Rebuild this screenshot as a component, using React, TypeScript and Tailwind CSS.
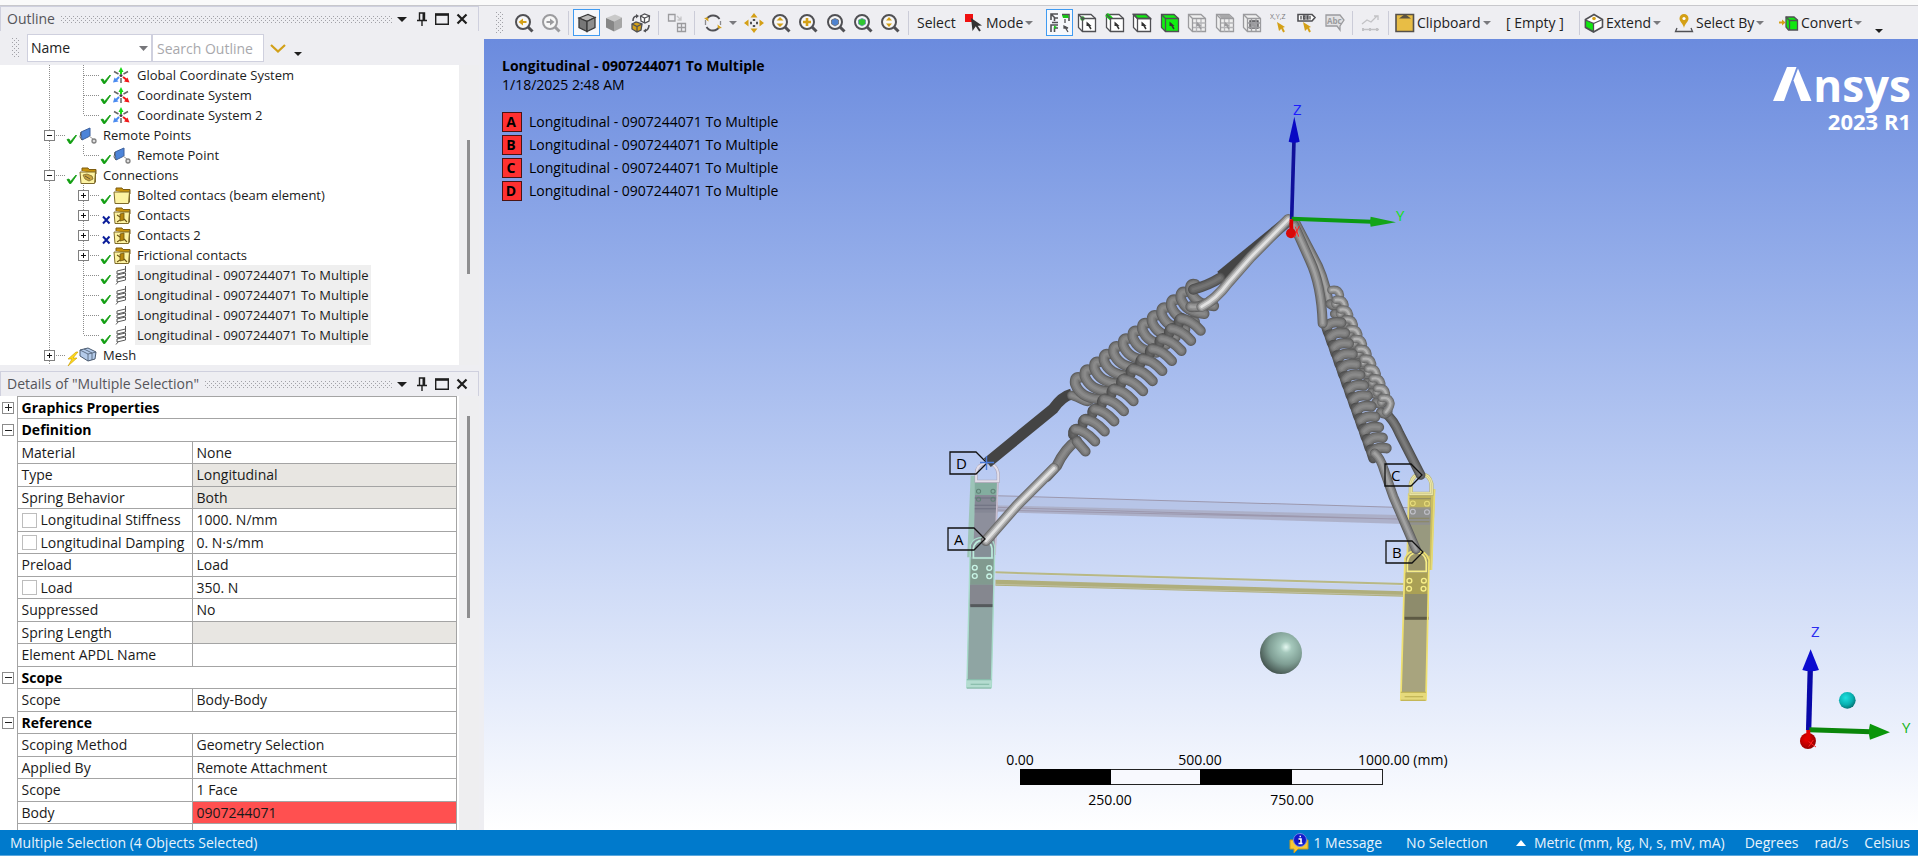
import React, { useState } from 'react';
import clsx from 'clsx';

type Status = 'ok' | 'off' | 'pending';
type IconKind = 'axes' | 'remote' | 'connections' | 'folder' | 'contact' | 'spring' | 'mesh';

interface TreeItem {
    label: string;
    level: 1 | 2;
    status: Status;
    icon: IconKind;
    box?: '+' | '-';
    last?: boolean;
    selected?: boolean;
}

interface DetailRow {
    label: string;
    value?: string;
    group?: '+' | '-';
    check?: boolean;
    tone?: 'readonly' | 'error';
}

const SPRING_NAME = 'Longitudinal - 0907244071 To Multiple';

const treeItems: TreeItem[] = [
    { label: 'Global Coordinate System', level: 2, status: 'ok', icon: 'axes' },
    { label: 'Coordinate System', level: 2, status: 'ok', icon: 'axes' },
    { label: 'Coordinate System 2', level: 2, status: 'ok', icon: 'axes', last: true },
    { label: 'Remote Points', level: 1, status: 'ok', icon: 'remote', box: '-' },
    { label: 'Remote Point', level: 2, status: 'ok', icon: 'remote', last: true },
    { label: 'Connections', level: 1, status: 'ok', icon: 'connections', box: '-' },
    { label: 'Bolted contacs (beam element)', level: 2, status: 'ok', icon: 'folder', box: '+' },
    { label: 'Contacts', level: 2, status: 'off', icon: 'contact', box: '+' },
    { label: 'Contacts 2', level: 2, status: 'off', icon: 'contact', box: '+' },
    { label: 'Frictional contacts', level: 2, status: 'ok', icon: 'contact', box: '+' },
    { label: SPRING_NAME, level: 2, status: 'ok', icon: 'spring', selected: true },
    { label: SPRING_NAME, level: 2, status: 'ok', icon: 'spring', selected: true },
    { label: SPRING_NAME, level: 2, status: 'ok', icon: 'spring', selected: true },
    { label: SPRING_NAME, level: 2, status: 'ok', icon: 'spring', selected: true, last: true },
    { label: 'Mesh', level: 1, status: 'pending', icon: 'mesh', box: '+' },
];

const detailRows: DetailRow[] = [
    { label: 'Graphics Properties', group: '+' },
    { label: 'Definition', group: '-' },
    { label: 'Material', value: 'None' },
    { label: 'Type', value: 'Longitudinal', tone: 'readonly' },
    { label: 'Spring Behavior', value: 'Both', tone: 'readonly' },
    { label: 'Longitudinal Stiffness', value: '1000. N/mm', check: true },
    { label: 'Longitudinal Damping', value: '0. N·s/mm', check: true },
    { label: 'Preload', value: 'Load' },
    { label: 'Load', value: '350. N', check: true },
    { label: 'Suppressed', value: 'No' },
    { label: 'Spring Length', value: '', tone: 'readonly' },
    { label: 'Element APDL Name', value: '' },
    { label: 'Scope', group: '-' },
    { label: 'Scope', value: 'Body-Body' },
    { label: 'Reference', group: '-' },
    { label: 'Scoping Method', value: 'Geometry Selection' },
    { label: 'Applied By', value: 'Remote Attachment' },
    { label: 'Scope', value: '1 Face' },
    { label: 'Body', value: '0907244071', tone: 'error' },
    { label: '', value: '' },
];

/* ---------- small shared pieces ---------- */

const Dots: React.FC<{ id: string; className: string }> = ({ id, className }) => (
    <svg className={className} aria-hidden="true">
        <defs>
            <pattern id={id} width="4" height="4" patternUnits="userSpaceOnUse">
                <rect width="1" height="1" fill="#a2a2a8" />
                <rect x="2" y="2" width="1" height="1" fill="#a2a2a8" />
            </pattern>
        </defs>
        <rect width="100%" height="100%" fill={`url(#${id})`} />
    </svg>
);

const Caret: React.FC<{ dark?: boolean }> = ({ dark }) => (
    <svg viewBox="0 0 8 4" className="h-1 w-2 shrink-0" aria-hidden="true">
        <path d="M0 0h8l-4 4z" fill={dark ? '#1e1e1e' : '#7a7a7e'} />
    </svg>
);

const PanelHeader: React.FC<{ title: string; id: string }> = ({ title, id }) => (
    <header className="flex h-[25px] shrink-0 items-center border-x border-t border-[#cfd0de] bg-[#eeeef2] pr-1.5 pl-1.5">
        <h2 className="whitespace-nowrap text-sm text-[#55555a]">{title}</h2>
        <Dots id={id} className="ml-1.5 h-[7px] min-w-0 flex-1" />
        <button aria-label="Window position" className="ml-1 flex h-5 w-3 items-center justify-center">
            <svg viewBox="0 0 10 5" className="h-[5px] w-2.5"><path d="M0 0h10l-5 5z" fill="#1e1e1e" /></svg>
        </button>
        <button aria-label="Auto hide" className="ml-1 flex h-5 w-5 items-center justify-center">
            <svg viewBox="0 0 12 14" className="h-3.5 w-3" fill="none" stroke="#1e1e1e">
                <path d="M3.500 8V1h5v7M1 8.500h10M6 9v5" strokeWidth="1.400" />
                <path d="M7.500 1v7" strokeWidth="2" />
            </svg>
        </button>
        <button aria-label="Maximize" className="flex h-5 w-5 items-center justify-center">
            <svg viewBox="0 0 14 12" className="h-3 w-3.5" fill="none" stroke="#1e1e1e">
                <path d="M.7 1.500h12.600v9.800H.7z" strokeWidth="1.400" />
                <path d="M0 1.500h14" strokeWidth="2.500" />
            </svg>
        </button>
        <button aria-label="Close" className="flex h-5 w-5 items-center justify-center">
            <svg viewBox="0 0 12 12" className="size-3" stroke="#1e1e1e" strokeWidth="2.200">
                <path d="M1.500 1.500l9 9M10.500 1.500l-9 9" />
            </svg>
        </button>
    </header>
);

/* ---------- outline tree ---------- */

const Guide: React.FC<{ vertical?: 'full' | 'half'; branch?: boolean; box?: '+' | '-' }> = ({ vertical, branch, box }) => (
    <svg viewBox="0 0 34 20" className="h-5 w-[34px] shrink-0" shapeRendering="crispEdges" aria-hidden="true">
        {vertical && (
            <path d={vertical === 'full' ? 'M17.500 0v20' : 'M17.500 0v10'} stroke="#8c8c8c" strokeDasharray="1 1" />
        )}
        {branch && <path d="M18 10.500h16" stroke="#8c8c8c" strokeDasharray="1 1" />}
        {box && (
            <>
                <rect x="12.500" y="5.500" width="10" height="10" fill="#fff" stroke="#808080" />
                <path d="M15 10.500h5" stroke="#111" />
                {box === '+' && <path d="M17.500 8v5" stroke="#111" />}
            </>
        )}
    </svg>
);

const StatusMark: React.FC<{ status: Status }> = ({ status }) => (
    <svg viewBox="0 0 13 20" className="h-5 w-[13px] shrink-0 overflow-visible" fill="none" aria-hidden="true">
        {status === 'ok' && <path d="M1 14.500l2-.5 1.500 2.500L10 10l.5.5L5 18.500H3.500z" fill="#0f9d0f" stroke="#0f9d0f" strokeWidth=".8" />}
        {status === 'off' && <path d="M3 11.500l6.500 7M9.500 11.500l-6.500 7" stroke="#0c1f9a" strokeWidth="2" />}
        {status === 'pending' && (
            <path d="M10 7L2 14h4l-4 7 9-8H7l5-6z" fill="#ffd91a" stroke="#c79a00" strokeWidth=".6" />
        )}
    </svg>
);

const FolderShape: React.FC = () => (
    <>
        <path d="M3 5V2h6l1 1.500h7V8" fill="#c8920c" stroke="#7d5c10" />
        <path d="M1 6h15.500l-1 11.500H2z" fill="#fdf3a2" stroke="#7d6a2c" />
        <path d="M16.500 4.500v12" stroke="#7d6a2c" />
    </>
);

const TreeIcon: React.FC<{ kind: IconKind }> = ({ kind }) => (
    <svg viewBox="0 0 18 19" className="h-[19px] w-[18px] shrink-0" fill="none" aria-hidden="true">
        {kind === 'axes' && (
            <>
                <path d="M8 8V4" stroke="#18d818" strokeWidth="2" />
                <path d="M8 1L5.500 6h5z" fill="#18d818" />
                <path d="M8 12v5M10.500 8L15 5.500M5.500 8L1 5.500" stroke="#666" strokeWidth="1.500" />
                <path d="M6 11l-3 3" stroke="#4b8cf0" strokeWidth="2" />
                <path d="M0 16.500l1.500-5 4 4z" fill="#4b8cf0" />
                <path d="M10 11l4 3" stroke="#f01818" strokeWidth="2" />
                <path d="M16.500 16.500l-5.500-1 3.500-4z" fill="#f01818" />
                <circle cx="8" cy="9.500" r="1.500" fill="#444" />
            </>
        )}
        {kind === 'remote' && (
            <>
                <path d="M2 6l9-4v8l-8 4z" fill="#4d84d8" stroke="#3b5f9c" />
                <path d="M2 6l-1 5 2 3" stroke="#555" />
                <path d="M10 10l4 3" stroke="#999" />
                <circle cx="15" cy="15" r="2" stroke="#808080" strokeWidth="1.300" fill="#ddd" />
            </>
        )}
        {kind === 'folder' && <FolderShape />}
        {kind === 'connections' && (
            <>
                <FolderShape />
                <path d="M4 9l4-1 5 2 1 3-4 2-4-2z" fill="#c9a440" stroke="#7d6a2c" strokeWidth=".8" />
                <path d="M6 10l5 3" stroke="#6a5a30" />
            </>
        )}
        {kind === 'contact' && (
            <>
                <FolderShape />
                <path d="M7 8l4-1v7l-4 1z" fill="#b8860b" stroke="#6e5614" strokeWidth=".8" />
                <path d="M4 9l3 2M11 13l3 3M4 16l3-2" stroke="#6e5614" strokeWidth="1.100" />
            </>
        )}
        {kind === 'spring' && (
            <path
                d="M12.500 0v3L4 5v3l8.500-2V3M12.500 7L4 9v3l8.500-2V7M12.500 11L4 13v3l8.500-2v-3M5 16l-2 2.500"
                stroke="#5a5a5a"
            />
        )}
        {kind === 'mesh' && (
            <>
                <path d="M1 4l8-2 8 4-1 7-7 2-8-5z" fill="#b4cbea" stroke="#4a5a70" />
                <path d="M1 4l8 4 8-2M9 8v7M5 3l8 4v7" stroke="#4a5a70" strokeWidth=".8" />
            </>
        )}
    </svg>
);

const OutlineRow: React.FC<{ item: TreeItem }> = ({ item }) => {
    const guide = <Guide vertical={item.last ? 'half' : 'full'} branch box={item.box} />;
    return (
        <li className="flex h-5 items-center pl-8">
            {item.level === 2 && <Guide vertical="full" />}
            {item.box ? (
                <button aria-label={`${item.box === '+' ? 'Expand' : 'Collapse'} ${item.label}`} className="shrink-0">
                    {guide}
                </button>
            ) : (
                guide
            )}
            <StatusMark status={item.status} />
            <TreeIcon kind={item.icon} />
            <span
                className={clsx(
                    'ml-1 h-5 whitespace-nowrap pr-0.5 pl-0.5 text-[13px] leading-5 text-[#1c1c1c]',
                    item.selected && 'bg-[#efefef]'
                )}
            >
                {item.label}
            </span>
        </li>
    );
};

const OutlinePanel: React.FC = () => {
    const [query, setQuery] = useState('');
    return (
        <section className="flex shrink-0 flex-col">
            <PanelHeader title="Outline" id="dots-outline" />
            <div className="flex h-[34px] items-center bg-[#eeeef2] pl-3">
                <Dots id="dots-search" className="h-5 w-[7px]" />
                <div className="relative ml-2 w-[125px]">
                    <select
                        aria-label="Search field"
                        className="h-7 w-full appearance-none border border-[#cfd0de] bg-white pl-[3px] text-sm text-[#222]"
                    >
                        <option>Name</option>
                    </select>
                    <svg viewBox="0 0 9 5" className="pointer-events-none absolute top-3 right-1 h-[5px] w-[9px]">
                        <path d="M0 0h9L4.500 5z" fill="#76767a" />
                    </svg>
                </div>
                <input
                    type="text"
                    aria-label="Search Outline"
                    placeholder="Search Outline"
                    value={query}
                    onChange={(e) => setQuery(e.target.value)}
                    className="h-7 w-[112px] border border-[#cfd0de] bg-white pl-1 text-sm placeholder:text-[#a8a8ac]"
                />
                <button aria-label="Expand search" className="ml-1 flex h-6 w-5 items-center justify-center">
                    <svg viewBox="0 0 16 9" className="h-[9px] w-4" fill="none" stroke="#d2a018" strokeWidth="2.200">
                        <path d="M1 1l7 6.500L15 1" />
                    </svg>
                </button>
                <button aria-label="More" className="ml-1 flex h-6 w-3 items-end justify-center pb-1">
                    <Caret dark />
                </button>
            </div>
            <div className="flex bg-[#eeeef0]">
                <ul className="min-w-0 flex-1 bg-white">
                    {treeItems.map((item, i) => (
                        <OutlineRow key={i} item={item} />
                    ))}
                </ul>
                <div className="w-5 pt-[75px]">
                    <div className="ml-2 h-[134px] w-[3px] bg-[#8e8e90]" />
                </div>
            </div>
        </section>
    );
};

/* ---------- details table ---------- */

const DetailsPanel: React.FC = () => (
    <section className="flex min-h-0 flex-1 flex-col">
        <PanelHeader title={'Details of "Multiple Selection"'} id="dots-details" />
        <div className="flex min-h-0 flex-1 overflow-hidden bg-[#eeeef0]">
            <div className="min-w-0 flex-1 bg-white pr-0.5">
                <table className="w-full table-fixed border-collapse text-sm leading-5 text-[#1a1a1a]">
                    <colgroup>
                        <col className="w-[17px]" />
                        <col className="w-[175px]" />
                        <col />
                    </colgroup>
                    <tbody>
                        {detailRows.map((row, i) => (
                            <tr key={i} className="odd:h-[22px] even:h-[23px]">
                                <td className="p-0">
                                    {row.group && (
                                        <button
                                            aria-label={`Toggle ${row.label}`}
                                            className="ml-0.5 flex size-3 items-center justify-center border border-[#8c8c8c] bg-white"
                                        >
                                            <svg viewBox="0 0 7 7" className="size-[7px]" stroke="#222">
                                                <path d="M0 3.500h7" />
                                                {row.group === '+' && <path d="M3.500 0v7" />}
                                            </svg>
                                        </button>
                                    )}
                                </td>
                                {row.group ? (
                                    <th colSpan={2} className="border border-[#a4a4a4] p-0 pl-1 text-left font-bold text-black">
                                        {row.label}
                                    </th>
                                ) : (
                                    <>
                                        <td className="overflow-hidden whitespace-nowrap border border-[#a4a4a4] p-0 pl-1">
                                            {row.check ? (
                                                <label className="flex items-center gap-1">
                                                    <input
                                                        type="checkbox"
                                                        className="size-[15px] shrink-0 appearance-none border border-[#bdbdbd] bg-white"
                                                    />
                                                    {row.label}
                                                </label>
                                            ) : (
                                                row.label
                                            )}
                                        </td>
                                        <td
                                            className={clsx(
                                                'border border-[#a4a4a4] p-0 pl-1',
                                                row.tone === 'readonly' && 'bg-[#e8e6e2]',
                                                row.tone === 'error' && 'bg-[#ff5050]'
                                            )}
                                        >
                                            {row.value}
                                        </td>
                                    </>
                                )}
                            </tr>
                        ))}
                    </tbody>
                </table>
            </div>
            <div className="w-5 pt-5">
                <div className="ml-2 h-[202px] w-[3px] bg-[#8e8e90]" />
            </div>
        </div>
    </section>
);

/* ---------- graphics toolbar ---------- */

const Glyph: React.FC<{ children: React.ReactNode }> = ({ children }) => (
    <svg viewBox="0 0 20 20" className="size-5 shrink-0" fill="none" stroke="#505054" strokeWidth="1.300" aria-hidden="true">
        {children}
    </svg>
);

const ToolButton: React.FC<{ label: string; active?: boolean; children: React.ReactNode }> = ({ label, active, children }) => (
    <button
        aria-label={label}
        className={clsx(
            'flex h-[27px] w-[27px] shrink-0 items-center justify-center border',
            active ? 'border-[#3f9bf2] bg-[#f6f8fc]' : 'border-transparent'
        )}
    >
        <Glyph>{children}</Glyph>
    </button>
);

const MenuButton: React.FC<{ label: string; className: string; caret?: boolean; children?: React.ReactNode }> = ({
    label,
    className,
    caret = true,
    children,
}) => (
    <button className={clsx('flex h-7 shrink-0 items-center whitespace-nowrap text-sm text-[#222]', className)}>
        {children && <Glyph>{children}</Glyph>}
        <span className="mr-0.5 ml-0.5">{label}</span>
        {caret && <Caret />}
    </button>
);

const Divider = () => <div className="mx-1 h-6 w-px shrink-0 bg-[#cbccd8]" />;

const Lens: React.FC<{ tone?: string; children?: React.ReactNode }> = ({ tone = '#505054', children }) => (
    <>
        <path d="M13 13l5.500 5.500" stroke={tone} strokeWidth="3" />
        <circle cx="9" cy="9" r="7" stroke={tone} strokeWidth="2" fill="#f7f7f7" />
        {children}
    </>
);

const Cursor: React.FC<{ tone?: string }> = ({ tone = '#333' }) => (
    <>
        <path d="M9.500 8.500l5 4.500H9.500z" fill={tone} stroke="none" />
        <path d="M11 11l3 5" stroke={tone} strokeWidth="1.500" />
    </>
);

const Box: React.FC<{ fill?: string; tone?: string; children?: React.ReactNode }> = ({ fill = '#fff', tone = '#505054', children }) => (
    <>
        <path d="M1.500 1.500h12.500l4.500 4v13h-13l-4-4z" fill={fill} stroke={tone} />
        {children}
        <path d="M1.500 1.500l4 4h13M5.500 5.500v13" stroke={tone} />
        <Cursor tone={tone === '#505054' ? '#333' : tone} />
    </>
);

const SolidCube: React.FC<{ top: string; left: string; right: string; edge: string }> = ({ top, left, right, edge }) => (
    <>
        <path d="M2 5l9-3.500L18 4.500 10 8.500z" fill={top} stroke={edge} />
        <path d="M2 5l8 3.500v10L2 14.500z" fill={left} stroke={edge} />
        <path d="M18 4.500l-8 4v10l8-4z" fill={right} stroke={edge} />
    </>
);

const GREY = '#9b9b9e';
const GOLD = '#d4a017';

const Toolbar: React.FC = () => (
    <nav className="flex h-[33px] shrink-0 items-center overflow-hidden bg-[#eeeef2] pl-3">
        <Dots id="dots-tools" className="mr-1.5 h-[22px] w-2 shrink-0" />
        <ToolButton label="Previous view">
            <Lens><path d="M12.500 9H8" stroke={GOLD} strokeWidth="2" /><path d="M9 5.500v7L4.500 9z" fill={GOLD} stroke="none" /></Lens>
        </ToolButton>
        <ToolButton label="Next view">
            <Lens tone={GREY}><path d="M5.500 9H10" stroke={GREY} strokeWidth="2" /><path d="M9 5.500v7L13.500 9z" fill={GREY} stroke="none" /></Lens>
        </ToolButton>
        <Divider />
        <ToolButton label="Shaded with edges" active>
            <SolidCube top="#b9b9b9" left="#777" right="#8e8e8e" edge="#3a3a3a" />
        </ToolButton>
        <ToolButton label="Shaded"><SolidCube top="#c9c9c9" left="#868686" right="#a6a6a6" edge="none" /></ToolButton>
        <ToolButton label="Swap view">
            <path d="M9.500 3l4-2 5 2-.5 5-4 2-4-2z" fill="#fff" />
            <path d="M9.500 3l4 2 5-2M13.500 5v5" />
            <path d="M1 11l4-2 6 2-1 6-4 2-5-3z" fill={GOLD} />
            <path d="M1 11l5 2.500 5-2.500M6 13.500V19" />
            <path d="M2 8c0-3 1-5 4-5M18 12c0 3-1 5-4 6" strokeWidth="1.600" />
            <path d="M5 1l3 2-3 2.500zM15 15.500v4l-3-1.500z" fill="#505054" stroke="none" />
        </ToolButton>
        <Divider />
        <ToolButton label="Layout">
            <path d="M1.500 1.500h6.500v6.500H1.500zM10.500 10.500h8v8h-8zM14.500 10.500v8M10.500 14.500h8" stroke={GREY} />
            <path d="M10 3l4 4m0-3.500V7h-3.500" stroke="#c6c6c8" />
        </ToolButton>
        <Divider />
        <ToolButton label="Rotate">
            <path d="M3.500 6.500a7.500 7.500 0 0113-.5M16.500 13.500a7.500 7.500 0 01-13 .5" strokeWidth="1.800" />
            <path d="M2.500 7v5M17.500 8v4" stroke="#8b8b8e" />
            <path d="M1 5l4-.5.500 4zM19 15l-4 .5-.5-4z" fill={GOLD} stroke="none" />
        </ToolButton>
        <button aria-label="Rotate options" className="flex h-7 w-3.5 shrink-0 items-center justify-center"><Caret /></button>
        <div className="flex w-[164px] shrink-0 justify-between">
            <ToolButton label="Pan">
                <path d="M10 0l3.500 4.500h-7zM10 20l3.500-4.500h-7zM0 10l4.500-3.500v7zM20 10l-4.500-3.500v7z" fill={GOLD} stroke="none" />
                <path d="M10 6v2M10 12v2M6 10h2M12 10h2" strokeWidth="2.400" />
            </ToolButton>
            <ToolButton label="Zoom">
                <Lens><path d="M9 4l3.500 3.500h-7zM9 14l3.500-3.500h-7z" fill={GOLD} stroke="none" /></Lens>
            </ToolButton>
            <ToolButton label="Box zoom"><Lens><path d="M9 5v8M5 9h8" stroke={GOLD} strokeWidth="2.600" /></Lens></ToolButton>
            <ToolButton label="Zoom to fit">
                <Lens><path d="M5.500 7L9 5.500 12.500 7v4L9 13l-3.500-2z" fill="#4f83cf" stroke="#6b6b70" strokeWidth=".8" /></Lens>
            </ToolButton>
            <ToolButton label="Zoom to selection">
                <Lens><path d="M5.500 7L9 5.500 12.500 7v4L9 13l-3.500-2z" fill="#2fc72f" stroke="#6b8bb0" strokeWidth=".8" /></Lens>
            </ToolButton>
            <ToolButton label="Toggle magnifier">
                <Lens><path d="M9 4l3 3.500H6zM9 14l3-3.500H6z" fill={GOLD} stroke="none" /></Lens>
            </ToolButton>
        </div>
        <Divider />
        <MenuButton label="Select" className="w-[47px] pl-0.5" caret={false} />
        <MenuButton label="Mode" className="w-[86px] pl-1">
            <path d="M1 1h8v8H1z" fill="#f01010" stroke="none" />
            <path d="M7 5l11 7.500-6 .5-3.500 5z" fill="#333" stroke="none" />
            <path d="M12 12l4 6" stroke="#333" strokeWidth="2" />
        </MenuButton>
        <div className="flex w-[302px] shrink-0 justify-between">
            <ToolButton label="Auto select" active>
                <path d="M1 7V1h7M1 1l4 4h3M12 1.500h7V8M1 19v-7h7M4.500 8V5M4.500 19v-4H8" strokeWidth="1.600" />
                <path d="M12 2h6l1 3h-6zM4 12.500l3 1.500-3 2.500z" fill="#19c419" stroke="none" />
                <path d="M14 13l4 2h-4zM15 14l3 5" fill="#333" />
                <path d="M2 9.500h6M15 6v4" />
            </ToolButton>
            <ToolButton label="Vertex"><Box><circle cx="5.500" cy="5.500" r="2.200" fill="#2d9a2d" stroke="none" /></Box></ToolButton>
            <ToolButton label="Edge"><Box><path d="M1.500 1.500l5 4.500" stroke="#12d412" strokeWidth="4" /></Box></ToolButton>
            <ToolButton label="Face"><Box><path d="M1.500 1.500H14l4.500 4h-13z" fill="#10e810" /></Box></ToolButton>
            <ToolButton label="Body"><Box fill="#10f010" /></ToolButton>
            <ToolButton label="Node">
                <Box fill="#efefef" tone={GREY}><path d="M9.500 5.500v13M14 5.500v13M5.500 10h13M5.500 14.500h13" stroke="#b5b5b8" /></Box>
            </ToolButton>
            <ToolButton label="Element face">
                <Box fill="#efefef" tone={GREY}>
                    <path d="M4 2h10l3 3H6z" fill="#a8a8aa" stroke="none" />
                    <path d="M9.500 5.500v13M14 5.500v13M5.500 10h13M5.500 14.500h13" stroke="#b5b5b8" />
                </Box>
            </ToolButton>
            <ToolButton label="Element">
                <Box fill="#efefef" tone={GREY}>
                    <path d="M8 8h8v7H8z" fill="#b4b4b6" />
                    <path d="M9.500 5.500v13M14 5.500v13M5.500 10h13M5.500 14.500h13" stroke={GREY} />
                </Box>
            </ToolButton>
            <ToolButton label="Coordinates">
                <text x="0" y="6" fontSize="7" fill="#77777a" stroke="none">X,Y,Z</text>
                <path d="M7 9l8 5-3 1-3 3z" fill={GOLD} stroke="none" />
                <path d="M11 13l3 6" stroke={GOLD} strokeWidth="2" />
            </ToolButton>
            <ToolButton label="Label selection">
                <path d="M1 1.500h14l3 3-3 3.500H1z" fill="#fff" strokeWidth="1.600" />
                <path d="M4 3v3.500M13 3v3.500" />
                <path d="M6.500 3h1.500v3H6.500zM10 3h1v3h-1z" />
                <path d="M6 9l8 5-3 1-3 3z" fill={GOLD} stroke="none" />
                <path d="M10 13l3 6" stroke={GOLD} strokeWidth="2" />
            </ToolButton>
            <ToolButton label="Annotation">
                <path d="M1 2h14l4 5-4 6v4l-3-4H1z" fill="#e2e2e4" stroke={GREY} />
                <text x="2" y="11" fontSize="8" fontWeight="bold" fill={GREY} stroke="none">Abc</text>
            </ToolButton>
        </div>
        <Divider />
        <ToolButton label="Chart">
            <path d="M1 11l5-4 4 2 6-6M13 3h4v4M1 16.500h17" stroke="#c2c2c5" />
            <path d="M1 16.500h2M8 16.500h2M15 16.500h2" stroke="#c2c2c5" strokeWidth="3" />
        </ToolButton>
        <Divider />
        <MenuButton label="Clipboard" className="w-[107px] pl-0.5">
            <path d="M1 1.500h17.500v17H1z" fill="#e8bd45" stroke="#55504a" strokeWidth="1.600" />
            <path d="M4 5.500h12L10 1z" fill="#5c5340" stroke="none" />
        </MenuButton>
        <MenuButton label="[ Empty ]" className="w-[75px] pl-1" caret={false} />
        <Divider />
        <MenuButton label="Extend" className="w-[90px]">
            <path d="M1.500 6.500L10 1.500l8.500 5v7.500l-9 5-8-4.500z" fill="#fff" strokeWidth="1.600" />
            <path d="M1.500 7l8 3.500v8l-8-4.500z" fill="#10e810" />
            <path d="M9.500 10.500l9-4" />
            <circle cx="10" cy="5.500" r="1.800" fill={GOLD} stroke="none" />
        </MenuButton>
        <MenuButton label="Select By" className="w-[105px]">
            <path d="M10 1a4.500 4.500 0 014.500 4.500C14.500 9 11 10 10 15 9 10 5.500 9 5.500 5.500A4.500 4.500 0 0110 1z" fill={GOLD} stroke="none" />
            <circle cx="10" cy="5.500" r="1.600" fill="#fff" stroke="none" />
            <path d="M3 15l-1.500 3.500h17L17 15" />
        </MenuButton>
        <MenuButton label="Convert" className="w-[92px]">
            <path d="M7 4h8l3.500 3v10h-9L7 14z" fill="#10e810" />
            <path d="M7 4l3.500 3.500h8M10.500 7.500V17" />
            <path d="M0 9.500h4" stroke={GOLD} strokeWidth="2" />
            <path d="M3 6.500v6L6.500 9.500z" fill={GOLD} stroke="none" />
        </MenuButton>
        <button aria-label="More tools" className="flex h-6 w-4 items-end justify-center pb-0.5"><Caret dark /></button>
    </nav>
);

/* ---------- 3D scene ---------- */

type Tones = [string, string, string, string];

// A tube is one path stroked from its dark rim inwards to its highlight
const Tube: React.FC<{ d: string; w: number; tones: Tones }> = ({ d, w, tones }) => (
    <g fill="none" strokeLinecap="round" strokeLinejoin="round">
        <path d={d} stroke={tones[0]} strokeWidth={w} />
        <path d={d} stroke={tones[1]} strokeWidth={w * 0.8} />
        <path d={d} stroke={tones[2]} strokeWidth={w * 0.55} />
        <path d={d} stroke={tones[3]} strokeWidth={w * 0.25} />
    </g>
);

const MID: Tones = ['#5e5e5e', '#727272', '#808080', '#8a8a8a'];
const BACK: Tones = ['#4c4c4c', '#585858', '#606060', '#666666'];
const DARK: Tones = ['#424242', '#464646', '#484848', '#484848'];
const SHINY: Tones = ['#6c6c6c', '#909090', '#b8b8b8', '#e2e2e2'];
const SOFT: Tones = ['#606060', '#787878', '#8e8e8e', '#a2a2a2'];

const range = (n: number) => Array.from({ length: n }, (_, i) => i);

const LeftSprings: React.FC = () => (
    <g transform="translate(930 200) scale(.3333)">
        {/* rear spring, tag D */}
        <path d="M1070 45L1085 75 885 250 862 215z" fill="#444" />
        <path d="M172 788L370 626Q395 590 425 582" stroke="#444" strokeWidth="33" fill="none" />
        <Tube d="M425 586Q440 590 458 600T480 598" w={28} tones={MID} />
        {range(13).map((k) => {
            const i = 12 - k;
            const x = 782 - i * 28.8;
            const y = 256 + i * 23.3;
            return <Tube key={i} d={`M${x + 14} ${y - 3}Q${x - 4} ${y - 8} ${x - 1} ${y + 16}Q${x + 14} ${y + 58} ${x + 70} ${y + 62}`} w={31} tones={MID} />;
        })}
        <Tube d="M870 234Q835 256 790 268" w={32} tones={['#505050', '#5e5e5e', '#6a6a6a', '#747474']} />
        {/* front spring, tag A */}
        <Tube d="M440 722Q405 745 380 798L350 830" w={32} tones={MID} />
        <Tube d="M372 805L262 915L168 1022" w={32} tones={SHINY} />
        {range(13).map((k) => {
            const x = 812 - k * 28.8;
            const y = 392 + k * 30.2;
            const end = k === 12;
            return (
                <g key={k}>
                    {!end && <Tube d={`M${x - 66} ${y - 20}Q${x - 68} ${y - 34} ${x - 56} ${y - 38}`} w={30} tones={BACK} />}
                    <Tube d={end ? `M${x - 26} ${y - 30}L${x} ${y}` : `M${x - 60} ${y - 36}Q${x - 30} ${y - 34} ${x} ${y}`} w={31} tones={MID} />
                </g>
            );
        })}
        <Tube d="M850 298Q812 326 782 320" w={32} tones={SOFT} />
        <Tube d="M1075 58L962 172L895 248Q860 296 815 320" w={32} tones={SHINY} />
    </g>
);

const RightSprings: React.FC = () => (
    <g transform="translate(1260 90) scale(.3333)">
        {/* rear spring, tag C */}
        <Tube d="M108 400L160 500Q190 550 206 630" w={28} tones={SOFT} />
        <Tube d="M375 968Q402 990 418 1030L482 1155" w={29} tones={['#4e4e4e', '#606060', '#707070', '#7c7c7c']} />
        {range(12).map((i) => {
            const x = 240 + i * 13.8;
            const y = 610 + i * 29.5;
            return (
                <g key={i}>
                    <Tube d={`M${x - 30} ${y + 32}Q${x - 16} ${y + 44} ${x - 8} ${y + 30}`} w={28} tones={MID} />
                    <Tube d={`M${x - 26} ${y - 10}Q${x - 4} ${y - 14} ${x} ${y + 6}Q${x - 2} ${y + 20} ${x - 14} ${y + 32}`} w={25} tones={['#686868', '#808080', '#969696', '#b4b4b4']} />
                </g>
            );
        })}
        {/* front spring, tag B */}
        {range(13).map((i) => {
            const x = 246 + i * 11.3;
            const y = 698 + i * 31.4;
            return (
                <g key={i}>
                    <Tube d={`M${x - 50} ${y + 4}L${x - 42} ${y + 30}`} w={30} tones={BACK} />
                    <Tube d={`M${x - 46} ${y + 12}Q${x - 32} ${y - 6} ${x - 2} ${y}`} w={31} tones={MID} />
                </g>
            );
        })}
        <Tube d="M344 1090Q362 1105 372 1140L400 1220L468 1378" w={29} tones={SOFT} />
        <Tube d="M102 405L150 512Q184 585 188 700" w={30} tones={SOFT} />
        {/* coordinate system */}
        <path d="M95 388L102 150" stroke="#10109a" strokeWidth="11" />
        <path d="M103 80l16 75q-16 6-33 0z" fill="#0808c4" />
        <path d="M95 386L335 395" stroke="#0c9a12" strokeWidth="12" />
        <path d="M408 397l-76-17q-4 15 0 30z" fill="#14a51a" />
        <path d="M94 388v34" stroke="#d80000" strokeWidth="11" />
        <circle cx="93" cy="430" r="15" fill="#d80808" />
        <path d="M106 410l10 30M118 408l-16 34" stroke="#ff1c1c" strokeWidth="3" />
    </g>
);

const Plates: React.FC = () => (
    <g transform="translate(930 430) scale(.3444 .3333)" fill="none">
        <path d="M190 197L1395 233V264L190 226z" fill="#aeb9da" fillOpacity=".45" />
        <path d="M190 226L1395 256 1450 260V284L250 248 190 245z" fill="#a9abc2" fillOpacity=".85" />
        <path d="M190 197L1395 233M190 232L1450 270M190 240L1400 268" stroke="#9c98ae" strokeWidth="3" />
        <path d="M190 427L1375 462" stroke="#b8b884" strokeWidth="6" />
        <path d="M190 432L1375 467V485L190 449z" fill="#c2cde8" fillOpacity=".6" />
        <path d="M190 449L1375 484V500L190 467z" fill="#afae7c" />
        <path d="M190 463L1375 496" stroke="#c6c7b0" strokeWidth="2" />

        {/* rear left */}
        <path d="M118 137h14v245h-24z" fill="#9cc4b8" />
        <path d="M132 155h67l-8 210h-65z" fill="#8d8f9c" />
        <path d="M130 158h67v37h-67z" fill="#83ad9f" />
        <path d="M130 196h66v52h-66z" fill="#80818f" fillOpacity=".55" />
        <path d="M130 204h66M130 226h66M130 236h66" stroke="#6e7080" strokeWidth="3" />
        <path d="M197 155l-8 220" stroke="#c9bfd0" strokeWidth="5" />
        <path d="M134 154v-22q2-30 30-32 30 0 34 32v22z" stroke="#a9a2b4" strokeWidth="9" />
        <path d="M134 154v-22q2-30 30-32 30 0 34 32v22z" stroke="#e2deea" strokeWidth="6" />
        <g stroke="#5e8074" strokeWidth="3"><circle cx="141" cy="184" r="6" /><circle cx="183" cy="184" r="6" /><circle cx="141" cy="208" r="6" /><circle cx="183" cy="208" r="6" /></g>

        {/* front left */}
        <path d="M117 345Q125 322 155 322T188 350L178 775H107z" fill="#8fa5a3" />
        <path d="M117 388h70l-2 76h-70z" fill="#819a8f" />
        <path d="M115 464h71l-1 64h-70z" fill="#85878f" />
        <path d="M117 527h68" stroke="#55595c" strokeWidth="9" />
        <path d="M117 380V345Q125 322 155 322T188 350v30z" fill="#858f97" />
        <path d="M117 380V345Q125 322 155 322T188 350L178 775M117 350L107 775" stroke="#a8dccb" strokeWidth="4" />
        <path d="M126 384v-28q4-25 27-25t27 25v28z" stroke="#bcecdc" strokeWidth="5" />
        <g stroke="#c8f4e6" strokeWidth="4"><circle cx="130" cy="413" r="7" /><circle cx="172" cy="414" r="7" /><circle cx="130" cy="438" r="7" /><circle cx="172" cy="439" r="7" /></g>
        <path d="M107 748h72l-2 27h-70z" fill="#b4dcd0" />
        <path d="M107 749h71M118 763h54M107 774h70" stroke="#7fb5a2" strokeWidth="3" />

        {/* rear right */}
        <path d="M1452 178h15l-10 242h-16z" fill="#cbbf62" />
        <path d="M1390 192h65l-4 185h-66z" fill="#98997f" />
        <path d="M1390 194h64v44h-64z" fill="#bdb25e" />
        <path d="M1390 232h64l-2 52h-62z" fill="#8f8e94" fillOpacity=".8" />
        <path d="M1390 206h64M1390 265h60M1390 275h60" stroke="#8b8760" strokeWidth="3" />
        <path d="M1465 178l-9 242M1390 190l-4 190" stroke="#e6da74" strokeWidth="5" />
        <path d="M1396 191v-30q6-28 30-28t30 28v30z" stroke="#b9b477" strokeWidth="12" />
        <path d="M1396 191v-30q6-28 30-28t30 28v30z" stroke="#eee9a8" strokeWidth="8" />
        <path d="M1396 191v-30q6-28 30-28t30 28v30z" stroke="#c4bf84" strokeWidth="2" />
        <g stroke="#e9de7c" strokeWidth="3"><circle cx="1402" cy="220" r="7" /><circle cx="1443" cy="221" r="7" /></g>
        <g stroke="#c3c3cc" strokeWidth="3"><circle cx="1402" cy="245" r="7" /><circle cx="1443" cy="246" r="7" /></g>

        {/* front right */}
        <path d="M1379 385Q1388 362 1414 362T1449 390L1440 812H1367z" fill="#a8a47e" />
        <path d="M1379 428h70l-2 64h-70z" fill="#aaa055" />
        <path d="M1377 492h71l-1 74h-70z" fill="#8e8c6c" />
        <path d="M1378 565h70" stroke="#5d5a44" strokeWidth="9" />
        <path d="M1379 428V385Q1388 362 1414 362T1449 390v38z" fill="#99936a" />
        <path d="M1379 428V385Q1388 362 1414 362T1449 390L1440 812M1379 390L1367 812" stroke="#efe170" strokeWidth="5" />
        <path d="M1386 424v-28q4-27 28-27t27 27v28z" stroke="#f7ee88" strokeWidth="5" />
        <g stroke="#f7ee88" strokeWidth="4"><circle cx="1392" cy="452" r="7" /><circle cx="1434" cy="452" r="7" /><circle cx="1391" cy="476" r="7" /><circle cx="1433" cy="476" r="7" /></g>
        <path d="M1367 786h74l-2 27h-72z" fill="#e6da7c" />
        <path d="M1367 787h73M1378 800h54M1367 811h72" stroke="#b9ac4c" strokeWidth="3" />
    </g>
);

const Tag: React.FC<{ letter: string; x: number; y: number }> = ({ letter, x, y }) => (
    <g>
        <path d={`M${x} ${y}h26l11 11-11 11h-26z`} fill="none" stroke="#111" strokeWidth="1.300" />
        <text x={x + 6} y={y + 17} fontSize="15">{letter}</text>
    </g>
);

const Scene: React.FC = () => (
    <svg viewBox="484 39 1434 791" className="h-full w-full" fontSize="14" role="img" aria-label="Spring assembly">
        <defs>
            <radialGradient id="ball" cx=".62" cy=".36" r=".68">
                <stop offset="0" stopColor="#e4f8f1" />
                <stop offset=".2" stopColor="#a5c8bc" />
                <stop offset=".6" stopColor="#7f9e94" />
                <stop offset="1" stopColor="#44544f" />
            </radialGradient>
            <radialGradient id="cyan" cx=".4" cy=".35" r=".7">
                <stop offset="0" stopColor="#1ee0e0" />
                <stop offset=".6" stopColor="#08b0b0" />
                <stop offset="1" stopColor="#056c6c" />
            </radialGradient>
            <radialGradient id="red" cx=".4" cy=".4" r=".7">
                <stop offset="0" stopColor="#f00000" />
                <stop offset="1" stopColor="#8a0000" />
            </radialGradient>
        </defs>
        <Plates />
        <LeftSprings />
        <RightSprings />
        <ellipse cx="1281" cy="653" rx="21" ry="21" fill="url(#ball)" />
        <Tag letter="D" x={950} y={452} />
        <Tag letter="A" x={948} y={528} />
        <Tag letter="C" x={1385} y={464} />
        <Tag letter="B" x={1386} y={541} />
        <path d="M980 462.500h14M986.500 456v14" stroke="#4b7bd8" strokeWidth="1.400" />
        <text x="1293" y="115" fontSize="15" fill="#1c1cff">Z</text>
        <text x="1396" y="221" fontSize="15" fill="#12e012">Y</text>

        {/* scale */}
        <rect x="1020.500" y="769.500" width="362" height="15" fill="#f8f9fe" stroke="#222" />
        <path d="M1020 769h91v16h-91zM1200 769h92v16h-92z" fill="#000" />
        <g textAnchor="middle">
            <text x="1020" y="765">0.00</text>
            <text x="1200" y="765">500.00</text>
            <text x="1110" y="805">250.00</text>
            <text x="1292" y="805">750.00</text>
        </g>
        <text x="1358" y="765">1000.00 (mm)</text>

        {/* triad */}
        <g transform="translate(1440 600) scale(.3333)">
            <path d="M1106 390L1111 205" stroke="#0808a8" strokeWidth="16" />
            <path d="M1112 148l25 62q-25 8-50 0z" fill="#0c0cd0" />
            <path d="M1108 389L1292 395" stroke="#0a860a" strokeWidth="15" />
            <path d="M1350 397l-60-26q-6 24 0 48z" fill="#0a960a" />
            <circle cx="1104" cy="423" r="24" fill="url(#red)" />
            <path d="M1105 390v30" stroke="#e00000" strokeWidth="12" />
            <path d="M1106 425l22 16M1106 440l14-20" stroke="#ff2020" strokeWidth="3" />
            <circle cx="1222" cy="301" r="25" fill="url(#cyan)" />
        </g>
        <text x="1811" y="637" fontSize="15" fill="#2c2cf0">Z</text>
        <text x="1902" y="733" fontSize="15" fill="#14b414">Y</text>
    </svg>
);

const Viewport: React.FC = () => (
    <main className="relative min-h-0 flex-1 overflow-hidden bg-linear-to-b from-[#6b8bde] to-white text-black">
        <Scene />
        <div className="absolute top-[17px] left-[18px] text-sm">
            <h1 className="font-bold leading-5">{SPRING_NAME}</h1>
            <p className="leading-[18px]">1/18/2025 2:48 AM</p>
            <ul className="mt-[18px] flex flex-col gap-[3px]">
                {['A', 'B', 'C', 'D'].map((letter) => (
                    <li key={letter} className="flex items-center gap-[7px] leading-5">
                        <span className="flex h-5 w-5 items-center justify-center border border-[#4a1414] bg-[#ff3030] pr-0.5 font-bold">
                            {letter}
                        </span>
                        {SPRING_NAME}
                    </li>
                ))}
            </ul>
        </div>
        <div className="absolute top-6 right-[7px] flex flex-col items-end text-white">
            <div className="flex items-start">
                <svg viewBox="0 0 39 34" className="mt-1 h-[34px] w-[39px]" fill="#fff" aria-hidden="true">
                    <path d="M14 0h9.500L11 34H0z" />
                    <path d="M25 1.500L38.500 34H28L20.500 13.500z" />
                </svg>
                <span className="ml-px text-[44px] font-bold leading-[44px]">nsys</span>
            </div>
            <p className="text-[22px] font-bold leading-7">2023 R1</p>
        </div>
    </main>
);

const StatusBar: React.FC = () => (
    <footer className="flex h-[26px] shrink-0 items-center whitespace-nowrap border-b border-[#5aa7dd] bg-[#007acc] pr-2 pl-2.5 text-sm text-[#e8f3fb]">
        <span className="flex-1">Multiple Selection (4 Objects Selected)</span>
        <button className="flex items-center gap-1">
            <svg viewBox="0 0 20 20" className="size-5" aria-hidden="true">
                <path d="M1 7h18v9H9l-4 4v-4H1z" fill="#f6c934" stroke="#c99a1c" />
                <circle cx="11" cy="7" r="6.500" fill="#1018c8" stroke="#6d86e8" />
                <path d="M9.500 6h2.500v4.500M9.500 10.500h4M10.500 3.500h1.500" stroke="#fff" strokeWidth="1.600" />
            </svg>
            1 Message
        </button>
        <span className="ml-6">No Selection</span>
        <button className="ml-7 flex items-center gap-2">
            <svg viewBox="0 0 10 6" className="h-1.5 w-2.5" aria-hidden="true"><path d="M0 6l5-6 5 6z" fill="#fff" /></svg>
            Metric (mm, kg, N, s, mV, mA)
        </button>
        <span className="ml-5">Degrees</span>
        <span className="ml-4">rad/s</span>
        <span className="ml-4">Celsius</span>
    </footer>
);

const App: React.FC = () => (
    <div className="flex h-screen flex-col overflow-hidden bg-[#eeeef2] font-['Open_Sans','Noto_Sans',sans-serif]">
        <div className="h-1.5 shrink-0 border-b border-[#c8c8cc] bg-[#fafafa]" />
        <div className="flex min-h-0 flex-1">
            <aside className="mr-[5px] flex w-[479px] shrink-0 flex-col gap-1.5">
                <OutlinePanel />
                <DetailsPanel />
            </aside>
            <div className="flex min-w-0 flex-1 flex-col">
                <Toolbar />
                <Viewport />
            </div>
        </div>
        <StatusBar />
    </div>
);

export default App;
